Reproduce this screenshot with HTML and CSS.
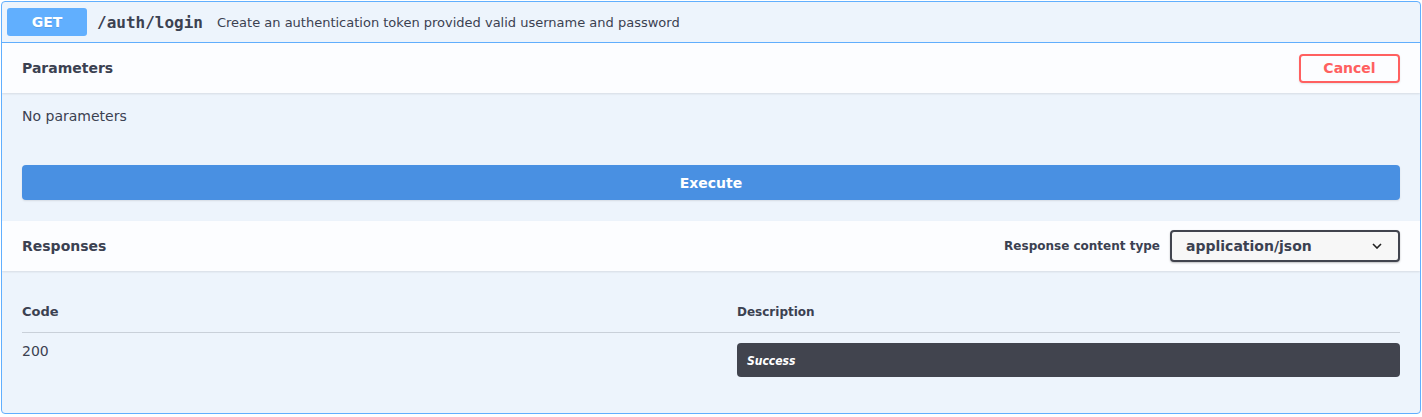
FILE: index.html
```html
<!DOCTYPE html>
<html>
<head>
<meta charset="utf-8">
<link rel="stylesheet" href="styles.css">
</head>
<body>
<div class="opblock">
  <div class="summary">
    <span class="method">GET</span>
    <span class="path">/auth/login</span>
    <span class="summary-desc">Create an authentication token provided valid username and password</span>
  </div>
  <div class="section-header">
    <h4 class="section-title">Parameters</h4>
    <button class="btn-cancel">Cancel</button>
  </div>
  <div class="desc-wrapper">
    <p class="no-params">No parameters</p>
  </div>
  <div class="execute-wrapper">
    <button class="btn-execute">Execute</button>
  </div>
  <div class="section-header">
    <h4 class="section-title">Responses</h4>
    <label class="ct-label">Response content type</label>
    <div class="select">
      <span>application/json</span>
      <svg class="chevron" width="10" height="6" viewBox="0 0 10 6"><path d="M1 1 L5 5 L9 1" fill="none" stroke="#222" stroke-width="1.6"/></svg>
    </div>
  </div>
  <div class="responses-inner">
    <div class="resp-table">
      <div class="th th-code">Code</div>
      <div class="th th-desc">Description</div>
      <div class="td td-code">200</div>
      <div class="td td-desc"><div class="markdown">Success</div></div>
    </div>
  </div>
</div>
</body>
</html>
```

FILE: styles.css
```css
* { box-sizing: border-box; }
html, body { margin: 0; background: #fff; }
body {
  padding: 1px;
  font-family: "DejaVu Sans", sans-serif;
  color: #3b4151;
}
.opblock {
  width: 1420px;
  border: 1px solid #61affe;
  border-radius: 4px;
  background: #edf4fc;
  overflow: hidden;
}
.summary {
  display: flex;
  align-items: center;
  height: 41px;
  padding: 0 5px;
  border-bottom: 1px solid #61affe;
}
.method {
  width: 80px;
  height: 28px;
  line-height: 28px;
  text-align: center;
  background: #61affe;
  color: #fff;
  font-weight: 700;
  font-size: 14px;
  border-radius: 3px;
  text-shadow: 0 1px 0 rgba(0,0,0,.1);
}
.path {
  font-family: "DejaVu Sans Mono", monospace;
  font-weight: 700;
  font-size: 16px;
  padding: 0 10px;
  color: #3b4151;
}
.summary-desc {
  font-size: 13px;
  margin-left: 4px;
  color: #3b4151;
}
.section-header {
  display: flex;
  align-items: center;
  height: 50px;
  padding: 0 20px;
  background: rgba(255,255,255,.8);
  box-shadow: 0 1px 2px rgba(0,0,0,.1);
  position: relative;
}
.section-title {
  flex: 1;
  margin: 0;
  font-size: 14px;
  font-weight: 700;
}
.btn-cancel {
  width: 101px;
  height: 29px;
  border: 2px solid #ff6060;
  border-radius: 4px;
  background: transparent;
  color: #ff6060;
  font-family: "DejaVu Sans", sans-serif;
  font-weight: 700;
  font-size: 14px;
  padding: 0;
  box-shadow: 0 1px 2px rgba(0,0,0,.1);
}
.desc-wrapper { padding: 15px 20px; }
.no-params {
  margin: 0;
  font-size: 14px;
  line-height: 17px;
}
.execute-wrapper { padding: 25px 20px 21px; }
.btn-execute {
  display: block;
  width: 100%;
  height: 35px;
  border: 0;
  border-radius: 4px;
  background: #4990e2;
  color: #fff;
  font-family: "DejaVu Sans", sans-serif;
  font-weight: 700;
  font-size: 14px;
  box-shadow: 0 1px 2px rgba(0,0,0,.1);
}
.ct-label {
  font-size: 12px;
  font-weight: 700;
  margin-right: 10px;
}
.select {
  width: 230px;
  height: 32px;
  display: flex;
  align-items: center;
  justify-content: space-between;
  padding: 0 16px 0 14px;
  border: 2px solid #41444e;
  border-radius: 4px;
  background: #f7f7f7;
  box-shadow: 0 1px 2px rgba(0,0,0,.25);
  font-size: 14px;
  font-weight: 700;
}
.chevron { display: block; }
.responses-inner { padding: 20px 20px 26px; }
.resp-table {
  display: grid;
  grid-template-columns: 715px 1fr;
}
.th {
  padding: 12px 0;
  line-height: 17px;
  font-weight: 700;
  border-bottom: 1px solid rgba(59,65,81,.2);
}
.th-code { font-size: 13px; }
.th-desc { font-size: 12px; padding-top: 13px; padding-bottom: 11px; }
.td { padding: 10px 0; }
.td-code { font-size: 14px; line-height: 17px; }
.markdown {
  background: #41444e;
  border-radius: 4px;
  padding: 11px 10px 9px;
  color: #fff;
  font-family: "DejaVu Sans Condensed", "DejaVu Sans", sans-serif;
  font-style: italic;
  font-weight: 700;
  font-size: 12px;
  line-height: 14px;
}
```
